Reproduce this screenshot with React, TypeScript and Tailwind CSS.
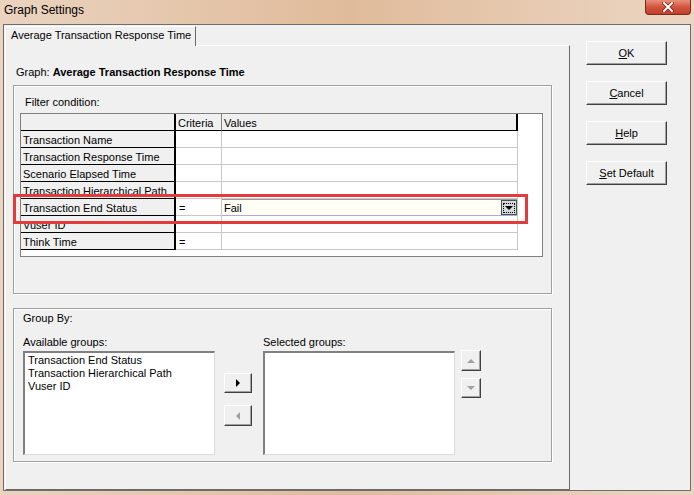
import React from 'react'

// Raised classic button edge
const raised =
  'bg-[#f0f0f0] border border-t-white border-l-white border-r-[#404040] border-b-[#404040] shadow-[inset_-1px_-1px_0_#a0a0a0]'

// Sunken list / grid edge
const sunken =
  'bg-white border-t-2 border-l-2 border-t-[#808080] border-l-[#808080] border-r border-b border-r-[#dcdcdc] border-b-[#dcdcdc]'

const groupBox =
  'border border-[#a0a0a0] shadow-[inset_1px_1px_0_#ffffff,1px_1px_0_#ffffff]'

function DlgButton({ u, rest }: { u: string; rest: string }) {
  return (
    <button className={`${raised} w-[81px] h-[24px] flex items-center justify-center text-[11px] leading-[13px] text-black`}>
      <span>
        <span className="underline">{u}</span>
        {rest}
      </span>
    </button>
  )
}

function Tri({ dir, color }: { dir: 'right' | 'left' | 'up' | 'down'; color: string }) {
  const pts = {
    right: '2,0 6,4 2,8',
    left: '6,0 2,4 6,8',
    up: '0,6 4,2 8,6',
    down: '0,2 4,6 8,2',
  }[dir]
  return (
    <svg width="8" height="8" viewBox="0 0 8 8">
      <polygon points={pts} fill={color} />
    </svg>
  )
}

const rows = [
  { name: 'Transaction Name', crit: '', val: '' },
  { name: 'Transaction Response Time', crit: '', val: '' },
  { name: 'Scenario Elapsed Time', crit: '', val: '' },
  { name: 'Transaction Hierarchical Path', crit: '', val: '' },
  { name: 'Transaction End Status', crit: '=', val: 'Fail', combo: true },
  { name: 'Vuser ID', crit: '', val: '' },
  { name: 'Think Time', crit: '=', val: '' },
]

function FilterGrid() {
  return (
    <div className="relative ml-[6px] mt-[4px] w-[523px] h-[144px] bg-white border border-[#808080]">
      {/* header row */}
      <div className="flex h-[17px]">
        <div className="w-[155px] bg-[#f0f0f0] border-r-2 border-b border-black" />
        <div className="w-[46px] h-[17px] overflow-hidden bg-[#f0f0f0] border-r border-r-[#808080] border-b border-black pl-[2px] text-[11px] leading-[19px]">
          Criteria
        </div>
        <div className="w-[296px] h-[17px] overflow-hidden bg-[#f0f0f0] border-r-2 border-b border-black pl-[2px] text-[11px] leading-[19px]">
          Values
        </div>
      </div>
      {rows.map((r) => (
        <div key={r.name} className="flex h-[17px]">
          <div className="w-[155px] h-[17px] bg-[#f0f0f0] border-r-2 border-b border-black pl-[2px] text-[11px] leading-[19px] whitespace-nowrap overflow-hidden">
            {r.name}
          </div>
          <div className="w-[46px] h-[17px] overflow-hidden border-r border-b border-[#c8c8c8] pl-[3px] text-[11px] leading-[19px]">
            {r.crit}
          </div>
          <div className="w-[296px] h-[17px] border-r border-b border-[#c8c8c8] text-[11px] leading-[19px]">
            {r.combo ? (
              <div className="flex h-[17px] border-t border-[#9a9a9a] border-b border-b-[#b4a8d0] bg-[#fffff6]">
                <div className="flex-1 pl-[2px] leading-[16px]">{r.val}</div>
                <div className="w-[16px] h-[15px] bg-[#d8d8d8] border border-[#3c5a5a] flex items-center justify-center">
                  <div className="w-[12px] h-[10px] border border-dotted border-black flex items-center justify-center">
                    <Tri dir="down" color="#000" />
                  </div>
                </div>
              </div>
            ) : (
              r.val
            )}
          </div>
        </div>
      ))}
      {/* red annotation */}
      <div className="absolute left-[-8px] top-[80px] w-[515px] h-[30px] border-[3px] border-[#e23b3b] pointer-events-none" />
    </div>
  )
}

function GroupBy() {
  return (
    <div className={`${groupBox} ml-[7px] mt-[14px] w-[539px] h-[154px] pt-[3px] pl-[9px] text-[11px] leading-[13px]`}>
      <div>Group By:</div>
      <div className="mt-[11px] flex">
        <div className="w-[240px]">Available groups:</div>
        <div>Selected groups:</div>
      </div>
      <div className="mt-[2px] flex items-start">
        <div className={`${sunken} w-[192px] h-[104px] pt-[1px] pl-[3px]`}>
          <div>Transaction End Status</div>
          <div>Transaction Hierarchical Path</div>
          <div>Vuser ID</div>
        </div>
        <div className="ml-[9px] pt-[22px] flex flex-col gap-[12px]">
          <button className={`${raised} w-[28px] h-[20px] flex items-center justify-center`}>
            <Tri dir="right" color="#000" />
          </button>
          <button className={`${raised} w-[28px] h-[21px] flex items-center justify-center`}>
            <Tri dir="left" color="#a0a0a0" />
          </button>
        </div>
        <div className={`${sunken} ml-[11px] w-[192px] h-[104px]`} />
        <div className="ml-[6px] mt-[-1px] flex flex-col gap-[7px]">
          <button className={`${raised} w-[20px] h-[21px] flex items-center justify-center`}>
            <Tri dir="up" color="#a0a0a0" />
          </button>
          <button className={`${raised} w-[20px] h-[20px] flex items-center justify-center`}>
            <Tri dir="down" color="#a0a0a0" />
          </button>
        </div>
      </div>
    </div>
  )
}

export default function App() {
  return (
    <div
      className="w-[694px] h-[495px] overflow-hidden flex flex-col bg-gradient-to-r from-[#ead3bf] via-[#e0bb9b] to-[#ecd6c3] text-black"
      style={{ fontFamily: '"Liberation Sans", Arial, sans-serif' }}
    >
      {/* title bar */}
      <div className="h-[24px] flex justify-between items-start">
        <div className="pl-[4px] pt-[3px] text-[12px] leading-[15px] text-black">Graph Settings</div>
        <div className="mr-[3px] w-[46px] h-[15px] rounded-b-[4px] border border-t-0 border-[#7a2b20] bg-gradient-to-b from-[#e8907c] via-[#d2533e] to-[#c0402b] flex items-center justify-center">
          <svg width="12" height="10" viewBox="0 0 12 10">
            <path d="M2 1 L10 9 M10 1 L2 9" stroke="#6a1d12" strokeWidth="3.4" strokeLinecap="square" />
            <path d="M2 1 L10 9 M10 1 L2 9" stroke="#ffffff" strokeWidth="2" strokeLinecap="square" />
          </svg>
        </div>
      </div>

      {/* dialog body */}
      <div className="mx-[3px] h-[467px] border border-[#6e6e6e] bg-[#f0f0f0] flex">
        {/* tab control */}
        <div className="w-[566px] pl-[1px] flex flex-col">
          <div className="h-[20px] flex items-end">
            <div className="relative z-10 -mb-px h-[20px] w-[191px] bg-[#f0f0f0] border-t border-l border-white border-r border-r-[#696969] pl-[5px] pt-[2px] text-[11px] leading-[13px]">
              Average Transaction Response Time
            </div>
          </div>
          <div className="flex-1 border-t border-l border-white border-r border-b border-r-[#696969] border-b-[#696969]">
            <div className="pt-[20px] pl-[10px] text-[11px] leading-[13px]">
              Graph: <span className="font-bold">Average Transaction Response Time</span>
            </div>
            <div className={`${groupBox} ml-[7px] mt-[6px] w-[539px] h-[209px] pt-[10px]`}>
              <div className="pl-[11px] text-[11px] leading-[13px]">Filter condition:</div>
              <FilterGrid />
            </div>
            <GroupBy />
          </div>
        </div>

        {/* buttons */}
        <div className="flex-1 pt-[16px] pl-[16px] flex flex-col gap-[16px]">
          <DlgButton u="O" rest="K" />
          <DlgButton u="C" rest="ancel" />
          <DlgButton u="H" rest="elp" />
          <DlgButton u="S" rest="et Default" />
        </div>
      </div>
    </div>
  )
}
